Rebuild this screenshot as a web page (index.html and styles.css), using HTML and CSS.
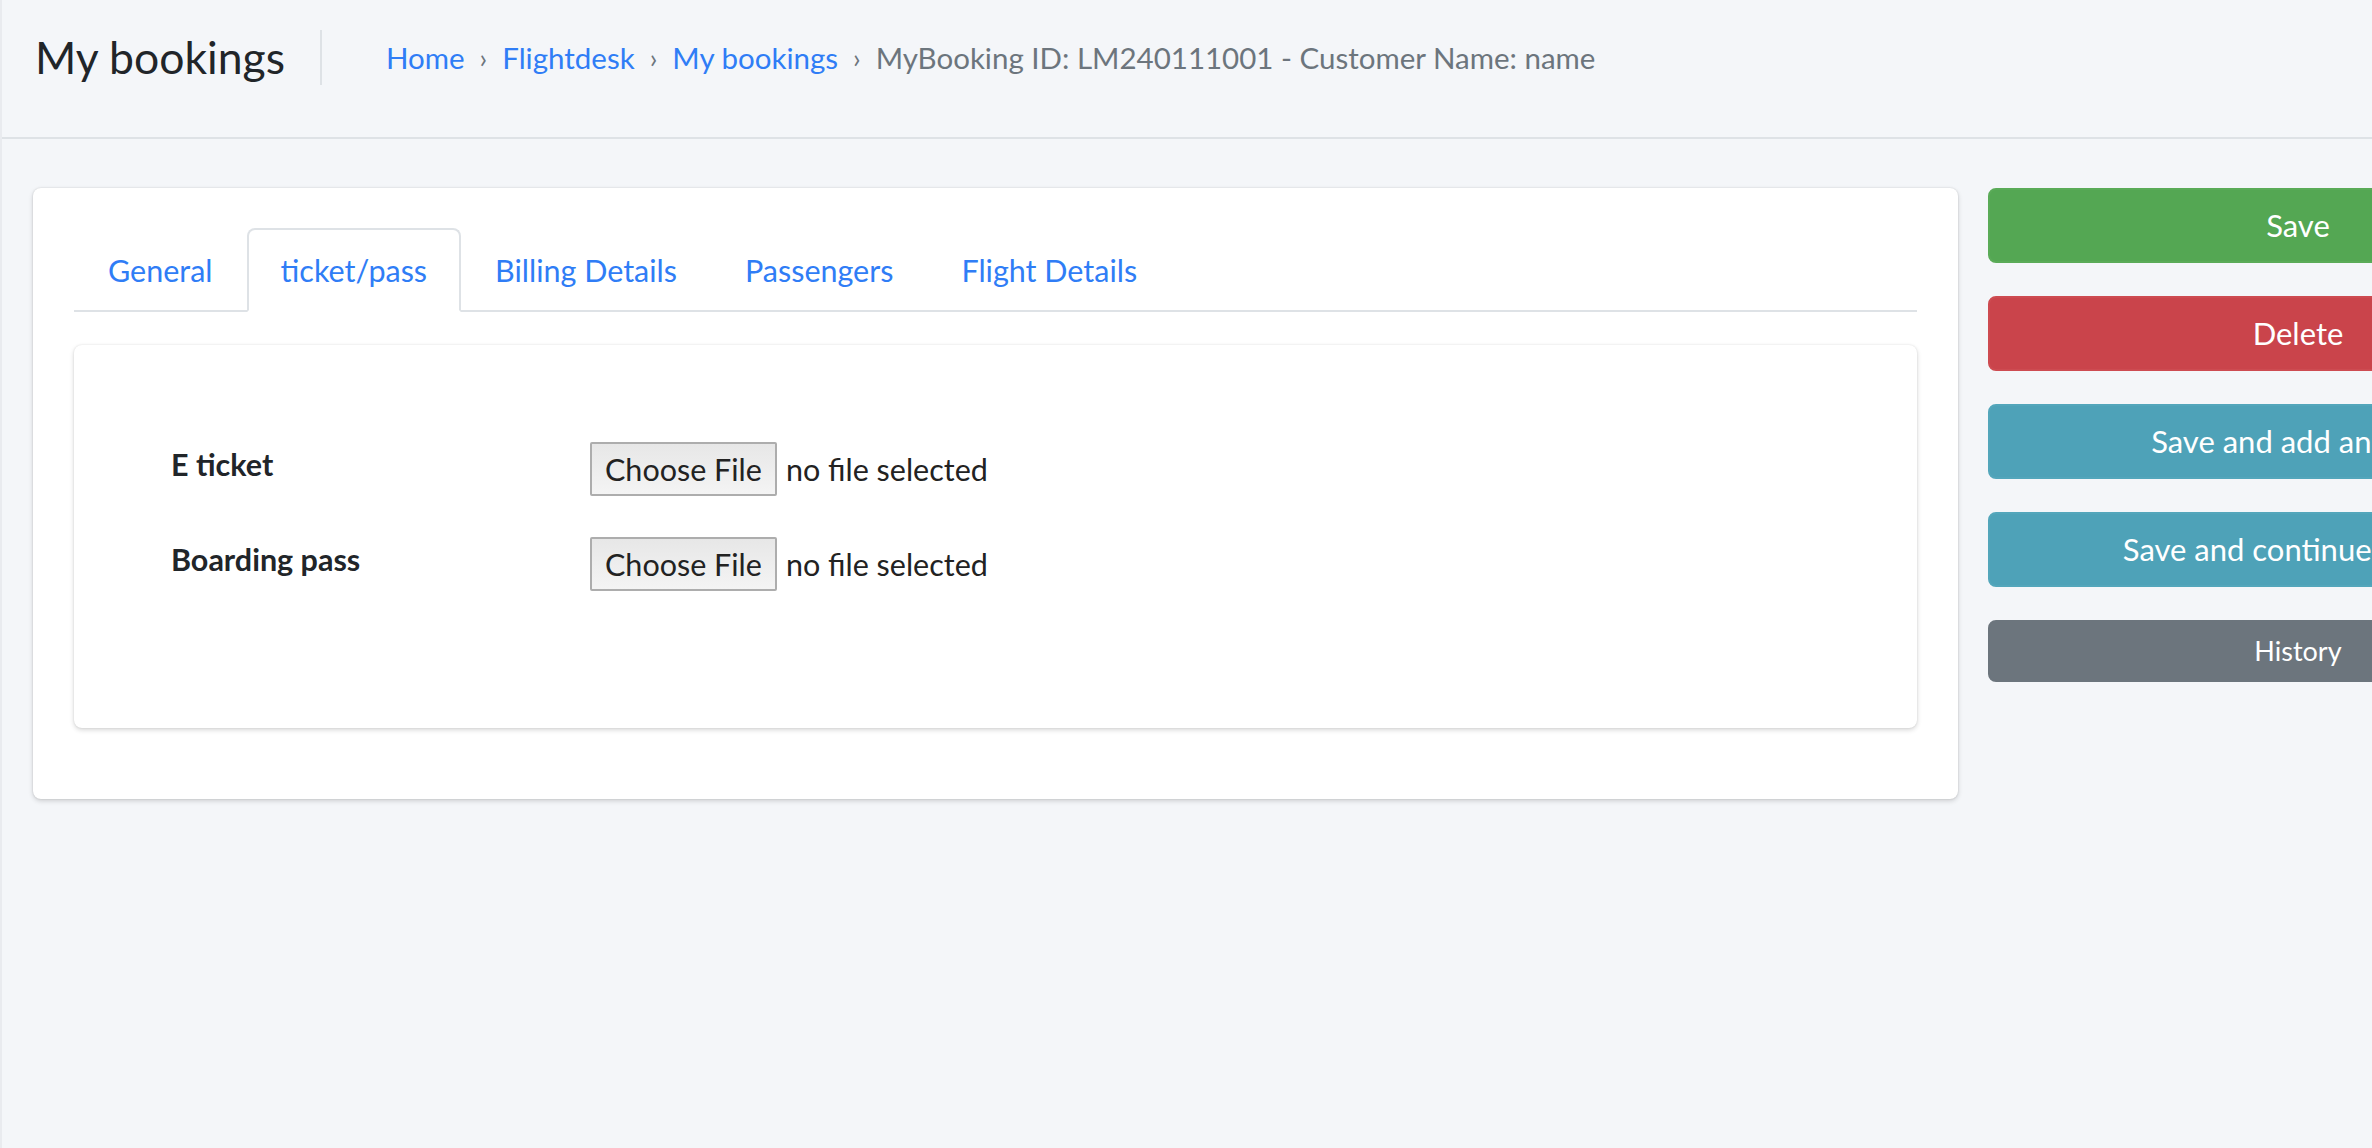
FILE: index.html
```html
<!DOCTYPE html>
<html lang="en">
<head>
<meta charset="utf-8">
<title>My bookings</title>
<link rel="stylesheet" href="styles.css">
</head>
<body>
<div class="page">
  <header class="content-header">
    <h1 class="title">My bookings</h1>
    <div class="divider"></div>
    <ol class="breadcrumb">
      <li><a href="#">Home</a></li>
      <li class="sep">›</li>
      <li><a href="#">Flightdesk</a></li>
      <li class="sep">›</li>
      <li><a href="#">My bookings</a></li>
      <li class="sep">›</li>
      <li class="active">MyBooking ID: LM240111001 - Customer Name: name</li>
    </ol>
  </header>

  <main class="content">
    <section class="card">
      <ul class="nav-tabs">
        <li><a class="tab" href="#">General</a></li>
        <li><a class="tab active" href="#">ticket/pass</a></li>
        <li><a class="tab" href="#">Billing Details</a></li>
        <li><a class="tab" href="#">Passengers</a></li>
        <li><a class="tab" href="#">Flight Details</a></li>
      </ul>
      <div class="tab-panel">
        <div class="form-row">
          <label class="field-label">E ticket</label>
          <div class="file-input">
            <span class="file-btn">Choose File</span>
            <span class="file-status">no file selected</span>
          </div>
        </div>
        <div class="form-row">
          <label class="field-label">Boarding pass</label>
          <div class="file-input">
            <span class="file-btn">Choose File</span>
            <span class="file-status">no file selected</span>
          </div>
        </div>
      </div>
    </section>

    <aside class="actions">
      <a class="btn btn-success" href="#">Save</a>
      <a class="btn btn-danger" href="#">Delete</a>
      <a class="btn btn-info" href="#">Save and add another</a>
      <a class="btn btn-info" href="#">Save and continue editing</a>
      <a class="btn btn-sm btn-secondary" href="#">History</a>
    </aside>
  </main>
</div>
</body>
</html>
```

FILE: styles.css
```css
html, body {
  margin: 0;
  padding: 0;
}

body {
  background: #f4f6f9;
  color: #212529;
  font-family: "Lato", "Source Sans Pro", "Liberation Sans", sans-serif;
  font-size: 30.5px;
  overflow: hidden;
}

a {
  text-decoration: none;
}

.page {
  min-height: 1148px;
  border-left: 2px solid #e9ebef;
  box-sizing: border-box;
}

/* ---------- header ---------- */
.content-header {
  height: 139px;
  box-sizing: border-box;
  padding: 0 0 23px 33px;
  border-bottom: 2px solid #dee2e6;
  display: flex;
  align-items: center;
}

.title {
  margin: 0;
  font-size: 44.5px;
  font-weight: 400;
  line-height: 1.2;
  color: #212529;
}

.divider {
  width: 0;
  height: 55px;
  border-left: 2px solid #dee2e6;
  margin-left: 35px;
}

.breadcrumb {
  list-style: none;
  margin: 0 0 0 64px;
  padding: 0;
  display: flex;
  align-items: center;
  font-size: 29.5px;
  color: #6c757d;
}

.breadcrumb a {
  color: #2f7df6;
}

.breadcrumb .sep {
  padding: 0 15px;
  font-size: 27px;
  color: #6c757d;
}

.breadcrumb .active {
  color: #6c757d;
}

/* ---------- content ---------- */
.content {
  display: flex;
  align-items: flex-start;
  gap: 30px;
  padding: 49px 0 0 31px;
}

.card {
  flex: 0 0 1925px;
  box-sizing: border-box;
  background: #fff;
  border-radius: 8px;
  box-shadow: 0 0 2px rgba(0, 0, 0, 0.14), 0 2px 5px rgba(0, 0, 0, 0.16);
  padding: 40px 41px 71px 41px;
}

.nav-tabs {
  list-style: none;
  margin: 0;
  padding: 0;
  display: flex;
  border-bottom: 2px solid #dee2e6;
}

.nav-tabs li {
  margin-bottom: -2px;
}

.tab {
  display: block;
  padding: 16px 32px 16px 32px;
  line-height: 48px;
  border: 2px solid transparent;
  border-radius: 8px 8px 0 0;
  color: #2f7df6;
}

.tab.active {
  border-color: #dee2e6 #dee2e6 #fff;
  background: #fff;
}

.tab-panel {
  margin-top: 33px;
  min-height: 383px;
  box-sizing: border-box;
  border-radius: 8px;
  background: #fff;
  box-shadow: 0 0 2px rgba(0, 0, 0, 0.1), 0 2px 5px rgba(0, 0, 0, 0.16);
  padding: 97px 97px 40px 97px;
  display: flex;
  flex-direction: column;
  gap: 41px;
}

.form-row {
  display: flex;
  align-items: flex-start;
}

.field-label {
  flex: 0 0 419px;
  font-weight: 700;
  line-height: 44px;
  color: #212529;
}

.file-input {
  display: flex;
  align-items: center;
  gap: 9px;
}

.file-btn {
  display: inline-block;
  height: 54px;
  box-sizing: border-box;
  padding: 0 13px;
  line-height: 50px;
  border: 2px solid #adadad;
  border-radius: 2px;
  background: linear-gradient(#e7e7e7, #f4f4f4);
  color: #222;
}

.file-status {
  color: #222;
}

/* ---------- actions ---------- */
.actions {
  flex: 1 1 auto;
  min-width: 0;
  overflow: hidden;
  display: flex;
  flex-direction: column;
  gap: 33px;
}

.btn {
  display: block;
  flex: 0 0 auto;
  width: 620px;
  box-sizing: border-box;
  padding: 12px 24px;
  border: 2px solid transparent;
  border-radius: 8px;
  font-size: 31px;
  line-height: 47px;
  text-align: center;
  color: #fff;
  white-space: nowrap;
}

.btn-sm {
  padding: 8px 16px;
  font-size: 27px;
  line-height: 42px;
}

.btn-success {
  background: #54a753;
  border-color: #5aab58;
}

.btn-danger {
  background: #ca444b;
  border-color: #cd4b51;
}

.btn-info {
  background: #4ea2b8;
  border-color: #53a6bb;
}

.btn-secondary {
  background: #6c757d;
  border-color: #6c757d;
}
```
